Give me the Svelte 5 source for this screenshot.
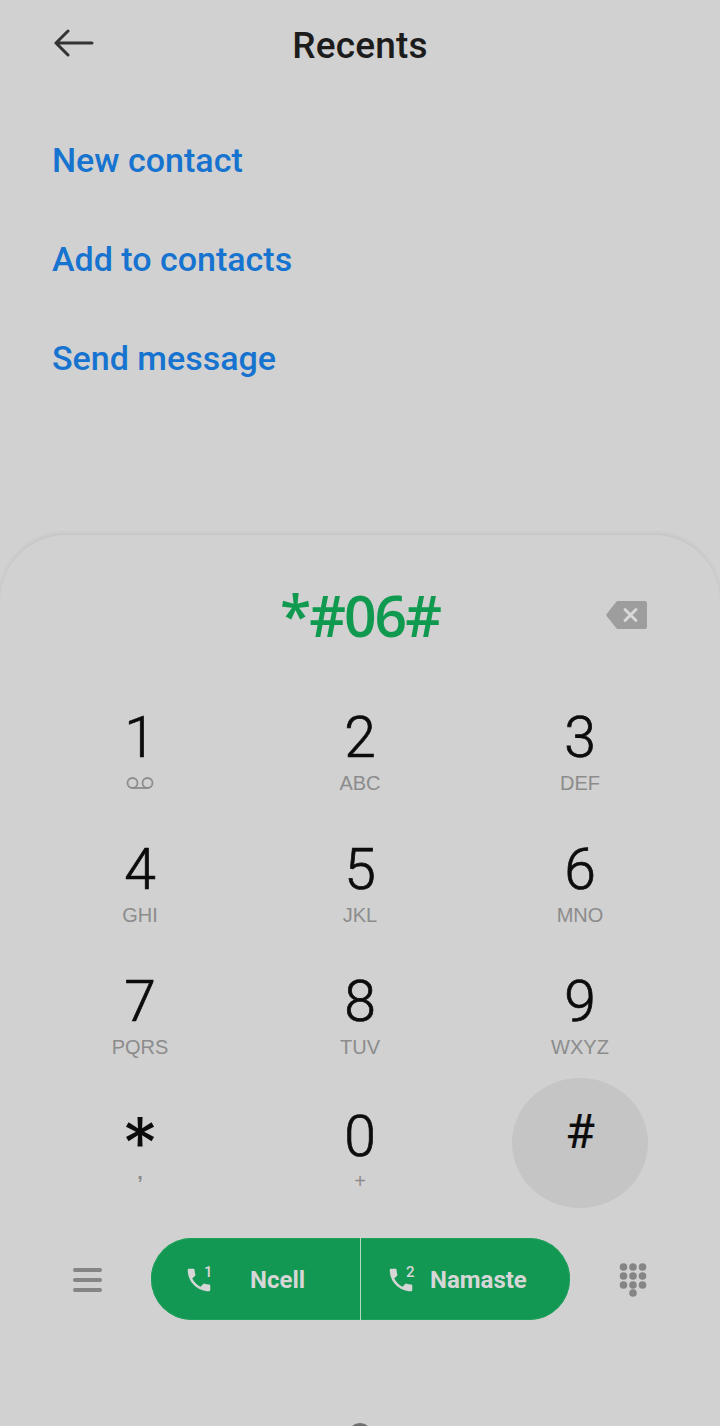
<script lang="ts">
  const links = ['New contact', 'Add to contacts', 'Send message'];
  const keys = [
    { digit: '1', sub: '', voicemail: true },
    { digit: '2', sub: 'ABC' },
    { digit: '3', sub: 'DEF' },
    { digit: '4', sub: 'GHI' },
    { digit: '5', sub: 'JKL' },
    { digit: '6', sub: 'MNO' },
    { digit: '7', sub: 'PQRS' },
    { digit: '8', sub: 'TUV' },
    { digit: '9', sub: 'WXYZ' },
    { digit: '*', sub: ',', star: true },
    { digit: '0', sub: '+', zero: true },
    { digit: '#', sub: '', pressed: true },
  ];
  const handset =
    'M6.6 10.8c1.4 2.8 3.8 5.1 6.6 6.6l2.2-2.2c.3-.3.7-.4 1-.2 1.1.4 2.3.6 3.6.6.6 0 1 .4 1 1V20c0 .6-.4 1-1 1C10.6 21 3 13.4 3 4c0-.6.4-1 1-1h3.5c.6 0 1 .4 1 1 0 1.3.2 2.5.6 3.6.1.3 0 .7-.2 1z';
  const padDots = [0, 1, 2].flatMap((r) => [0, 1, 2].map((c) => ({ x: 4.5 + c * 9.5, y: 4 + r * 9 })));
</script>

<div class="screen">
  <header class="topbar">
    <svg class="back" width="40" height="28" viewBox="0 0 40 28" fill="none" stroke="#333" stroke-width="3" stroke-linecap="round" stroke-linejoin="round">
      <path d="M38 14H2M14 2L2 14l12 12" />
    </svg>
    <h1>Recents</h1>
  </header>

  <nav class="links">
    {#each links as link}
      <div class="link">{link}</div>
    {/each}
  </nav>

  <section class="sheet">
    <div class="number">
      <span>*#06#</span>
      <svg class="backspace" width="41" height="28" viewBox="0 0 41 28">
        <path d="M12 0h27a2 2 0 0 1 2 2v24a2 2 0 0 1-2 2H12a2 2 0 0 1-1.600-.8L.8 15.200a2 2 0 0 1 0-2.400L10.400.8A2 2 0 0 1 12 0z" fill="#9d9d9d" />
        <path d="M19 8.500l11 11M30 8.500l-11 11" stroke="#d8d8d8" stroke-width="3" stroke-linecap="round" />
      </svg>
    </div>

    <div class="keys">
      {#each keys as key}
        <div class="key" class:pressed={key.pressed} class:star={key.star} class:zero={key.zero}>
          <span class="digit">{key.digit}</span>
          {#if key.voicemail}
            <svg class="vm" width="28" height="12" viewBox="0 0 28 12" fill="none" stroke="#8c8c8c" stroke-width="1.800">
              <circle cx="6.500" cy="6" r="5" />
              <circle cx="21.500" cy="6" r="5" />
              <path d="M6.500 11h15" />
            </svg>
          {:else}
            <span class="sub">{key.sub}</span>
          {/if}
        </div>
      {/each}
    </div>

    <div class="actions">
      <svg class="side" width="29" height="24" viewBox="0 0 29 24" fill="#858585">
        <rect y="0" width="29" height="4" rx="2" />
        <rect y="10" width="29" height="4" rx="2" />
        <rect y="20" width="29" height="4" rx="2" />
      </svg>

      <div class="call">
        <div class="sim first">
          <span class="phone">
            <svg width="30" height="30" viewBox="0 0 24 24" fill="#d6d6d6"><path d={handset} /></svg>
            <small>1</small>
          </span>
          <b>Ncell</b>
        </div>
        <div class="sim second">
          <span class="phone">
            <svg width="30" height="30" viewBox="0 0 24 24" fill="#d6d6d6"><path d={handset} /></svg>
            <small>2</small>
          </span>
          <b>Namaste</b>
        </div>
      </div>

      <svg class="side" width="28" height="34" viewBox="0 0 28 34" fill="#858585">
        {#each padDots as d}
          <circle cx={d.x} cy={d.y} r="3.800" />
        {/each}
        <circle cx="14" cy="30" r="3.800" />
      </svg>
    </div>
  </section>

  <div class="home"></div>
</div>

<style>
  :global(body) {
    margin: 0;
    background: #d1d1d1;
  }
  .screen {
    position: relative;
    width: 720px;
    height: 1426px;
    overflow: hidden;
    background: #d1d1d1;
    font-family: Roboto, 'Liberation Sans', sans-serif;
  }
  .topbar {
    position: relative;
    height: 90px;
    display: flex;
    align-items: center;
    justify-content: center;
  }
  .back {
    position: absolute;
    left: 54px;
    top: 29px;
  }
  h1 {
    margin: 0;
    font-size: 37px;
    font-weight: 500;
    letter-spacing: 0.2px;
    color: #1c1c1c;
  }
  .links {
    padding: 20px 0 0 52px;
    height: 444px;
    box-sizing: border-box;
  }
  .link {
    height: 99px;
    display: flex;
    align-items: center;
    font-size: 34px;
    font-weight: 500;
    color: #1673cf;
  }
  .sheet {
    height: 892px;
    box-sizing: border-box;
    padding-top: 40px;
    border-radius: 66px 66px 0 0;
    border-top: 1px solid #c7c7c7;
    box-shadow: 0 -1px 4px rgba(0, 0, 0, 0.06);
    background: #d1d1d1;
  }
  .number {
    position: relative;
    height: 80px;
    display: flex;
    align-items: center;
    justify-content: center;
    font-family: 'Open Sans', 'Noto Sans', sans-serif;
    font-size: 57px;
    font-weight: 600;
    letter-spacing: -2px;
    color: #109a50;
  }
  .backspace {
    position: absolute;
    left: 606px;
    top: 26px;
  }
  .keys {
    display: grid;
    grid-template-columns: repeat(3, 220px);
    grid-auto-rows: 132px;
    padding: 49px 30px 0;
  }
  .key {
    position: relative;
    display: flex;
    flex-direction: column;
    align-items: center;
    padding-top: 4px;
  }
  .digit {
    position: relative;
    height: 60px;
    line-height: 60px;
    font-size: 57px;
    font-weight: 300;
    -webkit-text-stroke: 0.7px #0c0c0c;
    color: #0c0c0c;
  }
  .sub {
    position: relative;
    height: 24px;
    margin-top: 3px;
    line-height: 24px;
    font-family: 'Liberation Sans', Arial, sans-serif;
    font-size: 20px;
    color: #8c8c8c;
  }
  .vm {
    margin-top: 9px;
  }
  .star .digit {
    height: 46px;
    font-family: Inter, Roboto, sans-serif;
    font-size: 72px;
    font-weight: 400;
    line-height: 78px;
    -webkit-text-stroke: 0;
  }
  .star .sub {
    font-weight: 700;
    margin-top: 10px;
  }
  .zero {
    padding-top: 7px;
  }
  .zero .sub {
    margin-top: 2px;
  }
  .pressed .digit {
    font-size: 48px;
    font-weight: 400;
    line-height: 56px;
    -webkit-text-stroke: 0.2px #0c0c0c;
  }
  .pressed::before {
    content: '';
    position: absolute;
    left: 42px;
    top: -22px;
    width: 136px;
    height: 130px;
    border-radius: 50%;
    background: #c5c5c5;
  }
  .actions {
    margin-top: 6px;
    padding-left: 73px;
    display: flex;
    align-items: center;
    gap: 49px;
  }
  .side {
    margin-top: 2px;
  }
  .call {
    width: 419px;
    height: 82px;
    display: flex;
    border-radius: 41px;
    overflow: hidden;
    background: #129852;
    box-shadow: inset 0 0 0 1px #1fa05b;
    color: #d6d6d6;
  }
  .sim {
    display: flex;
    align-items: center;
    padding-top: 2px;
    font-size: 24px;
  }
  .sim b {
    font-weight: 700;
  }
  .first {
    width: 210px;
    padding-left: 33px;
    gap: 36px;
    box-sizing: border-box;
    border-right: 1px solid #b9d6c4;
  }
  .second {
    padding-left: 25px;
    gap: 14px;
  }
  .phone {
    position: relative;
    display: flex;
  }
  .phone small {
    position: absolute;
    left: 20px;
    top: -2px;
    font-size: 15px;
    font-weight: 500;
  }
  .home {
    position: absolute;
    left: 348px;
    top: 1423px;
    width: 24px;
    height: 24px;
    box-sizing: border-box;
    border: 3px solid #6f6f6f;
    border-radius: 50%;
  }
</style>
